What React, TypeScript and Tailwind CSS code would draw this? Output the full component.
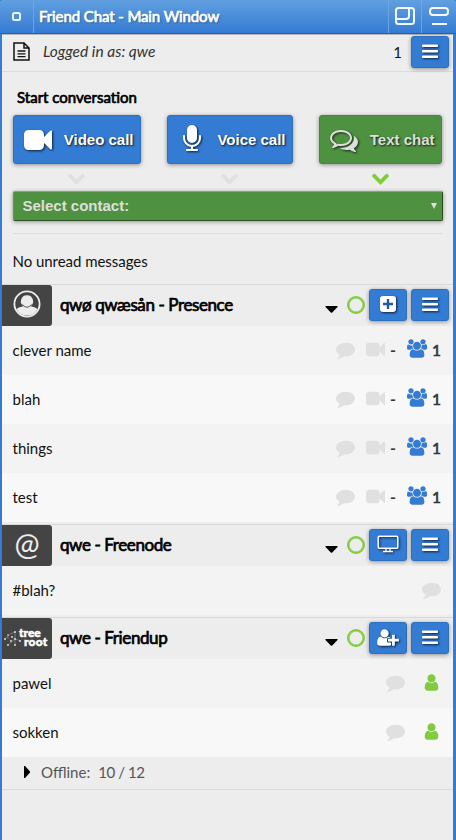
import type { ReactNode } from "react";

const PATHS = {
  users:
    "M593 896q-162 5-265 128h-134q-82 0-138-40.500t-56-118.500q0-353 124-353 6 0 43.500 21t97.500 42.500 119 21.500q67 0 133-23-5 37-5 66 0 159 93 293zm1071 637q0 120-73 189.500t-194 69.500h-874q-121 0-194-69.500t-73-189.500q0-53 3.500-103.500t14-109 26.500-108.500 43-97.500 62-81 85.500-53.500 111.500-20q10 0 43 21.500t73 48 107 48 135 21.500 135-21.500 107-48 73-48 43-21.500q61 0 111.500 20t85.500 53.500 62 81 43 97.500 26.500 108.500 14 109 3.500 103.500zm-1024-1277q0 106-75 181t-181 75-181-75-75-181 75-181 181-75 181 75 75 181zm704 384q0 159-112.500 271.500t-271.500 112.500-271.500-112.500-112.500-271.500 112.500-271.500 271.500-112.500 271.500 112.500 112.500 271.500zm576 225q0 78-56 118.500t-138 40.500h-134q-103-123-265-128 93-134 93-293 0-29-5-66 66 23 133 23 59 0 119-21.500t97.500-42.500 43.500-21q124 0 124 353zm-128-609q0 106-75 181t-181 75-181-75-75-181 75-181 181-75 181 75 75 181z",
  comment:
    "M1792 896q0 174-120 321.500t-326 233-450 85.500q-70 0-145-8-198 175-460 242-49 14-114 22-17 2-30.500-9t-17.500-29v-1q-3-4-.5-12t2-10 4.500-9.500l6-9 7-8.500 8-9q7-8 31-34.500t34.500-38 31-39.500 32.500-51 27-59 26-76q-157-89-247.500-220t-90.500-281q0-130 71-248.500t191-204.500 286-136.500 348-50.500q244 0 450 85.500t326 233 120 321.500z",
  comments:
    "M704 384q-153 0-286 52t-211.500 141-78.500 191q0 82 53 158t149 132l97 56-35 84q34-20 62-39l44-31 53 10q78 14 153 14 153 0 286-52t211.500-141 78.500-191-78.500-191-211.500-141-286-52zm0-128q191 0 353.500 68.500t256.500 186.500 94 257-94 257-256.500 186.500-353.500 68.500q-86 0-176-16-124 88-278 128-36 9-86 16h-3q-11 0-20.500-8t-11.500-21q-1-3-1-6.500t.5-6.500 2-6l2.500-5 3.500-5.500 4-5 4.500-5 4-4.500q5-6 23-25t26-29.500 22.500-29 25-38.500 20.500-44q-124-72-195-177t-71-224q0-139 94-257t256.500-186.500 353.500-68.500zm822 1169q10 24 20.500 44t25 38.500 22.500 29 26 29.500 23 25q1 1 4 4.500t4.500 5 4 5 3.500 5.500l2.500 5 2 6 .5 6.500-1 6.500q-3 14-13 22t-22 7q-50-7-86-16-154-40-278-128-90 16-176 16-271 0-472-132 58 4 88 4 161 0 309-45t264-129q125-92 192-212t67-254q0-77-23-152 129 71 204 178t75 230q0 120-71 224.500t-195 176.500z",
  video:
    "M1792 352v1088q0 42-39 59-13 5-25 5-27 0-45-19l-403-403v166q0 119-84.500 203.500t-203.500 84.500h-704q-119 0-203.500-84.500t-84.500-203.500v-704q0-119 84.500-203.500t203.500-84.500h704q119 0 203.500 84.500t84.500 203.500v165l403-402q18-19 45-19 12 0 25 5 39 17 39 59z",
  user:
    "M1536 1399q0 109-62.500 187t-150.500 78h-854q-88 0-150.500-78t-62.500-187q0-85 8.500-160.500t31.500-152 58.500-131 94-89 134.500-34.500q131 128 313 128t313-128q76 0 134.500 34.500t94 89 58.500 131 31.500 152 8.500 160.500zm-256-887q0 159-112.500 271.500t-271.500 112.500-271.500-112.500-112.500-271.500 112.500-271.500 271.500-112.500 271.500 112.500 112.500 271.500z",
  userPlus:
    "M704 896q-159 0-271.500-112.500t-112.500-271.500 112.500-271.500 271.500-112.500 271.500 112.500 112.500 271.500-112.500 271.500-271.500 112.500zm960 128h352q13 0 22.500 9.500t9.500 22.500v192q0 13-9.500 22.500t-22.500 9.500h-352v352q0 13-9.500 22.500t-22.500 9.500h-192q-13 0-22.500-9.500t-9.500-22.500v-352h-352q-13 0-22.500-9.500t-9.500-22.500v-192q0-13 9.500-22.500t22.500-9.500h352v-352q0-13 9.500-22.500t22.500-9.500h192q13 0 22.500 9.500t9.500 22.500v352zm-736 224q0 52 38 90t90 38h256v238q-68 50-171 50h-874q-121 0-194-69t-73-190q0-53 3.500-103.500t14-109 26.500-108.500 43-97.500 62-81 85.500-53.500 111.500-20q19 0 39 17 79 61 154.500 91.500t164.500 30.500 164.500-30.500 154.500-91.500q20-17 39-17 132 0 217 96h-223q-52 0-90 38t-38 90v192z",
  mic:
    "M1472 704v128q0 221-147.500 384.500t-364.500 187.500v132h256q26 0 45 19t19 45-19 45-45 19h-640q-26 0-45-19t-19-45 19-45 45-19h256v-132q-217-24-364.500-187.500t-147.500-384.500v-128q0-26 19-45t45-19 45 19 19 45v128q0 185 131.500 316.500t316.500 131.500 316.500-131.500 131.500-316.500v-128q0-26 19-45t45-19 45 19 19 45zm-256-384v512q0 132-94 226t-226 94-226-94-94-226v-512q0-132 94-226t226-94 226 94 94 226z",
  chevron:
    "M1683 808l-742 741q-19 19-45 19t-45-19l-742-741q-19-19-19-45.500t19-45.500l166-165q19-19 45-19t45 19l531 531 531-531q19-19 45-19t45 19l166 165q19 19 19 45.500t-19 45.500z",
};

type IconName = keyof typeof PATHS;

function Icon({ name, className, wide = 1792 }: { name: IconName; className: string; wide?: number }) {
  return (
    <svg viewBox={`0 0 ${wide} 1792`} className={`shrink-0 ${className}`} fill="currentColor">
      <path d={PATHS[name]} />
    </svg>
  );
}

const SHADOW = "drop-shadow-[1px_1px_1px_rgba(0,0,0,0.75)]";
const HEAVY = "[-webkit-text-stroke:0.7px_currentColor]";

function BlueButton({ children }: { children: ReactNode }) {
  return (
    <button className="flex h-8 w-[38px] shrink-0 items-center justify-center rounded-[3px] border border-[#2c6fbf] bg-[#347bd3] text-white shadow-[0_1px_4px_rgba(0,0,0,0.4)]">
      {children}
    </button>
  );
}

function Bars() {
  return (
    <svg viewBox="0 0 18 16" className={`-mt-[2px] h-4 w-[18px] ${SHADOW}`} fill="white">
      <rect x="1" y="1.500" width="16" height="2.500" rx=".7" />
      <rect x="1" y="7" width="16" height="2.500" rx=".7" />
      <rect x="1" y="12.500" width="16" height="2.500" rx=".7" />
    </svg>
  );
}

function PlusBox() {
  return (
    <svg viewBox="0 0 16 16" className={`-mt-[2px] h-4 w-4 ${SHADOW}`}>
      <rect width="16" height="16" rx="3" fill="white" />
      <path d="M8 3v10M3 8h10" stroke="#2458a0" strokeWidth="2.4" />
    </svg>
  );
}

function Monitor() {
  return (
    <svg viewBox="0 0 22 18" className={`-mt-[1px] h-[18px] w-[22px] ${SHADOW}`} fill="none" stroke="white">
      <rect x="1.2" y="1.2" width="19.6" height="12" rx="1" strokeWidth="1.5" />
      <path d="M9 13v3M13 13v3M6 16.5h10" strokeWidth="1.3" />
    </svg>
  );
}

function PersonAvatar() {
  return (
    <svg viewBox="0 0 28 28" className="-mt-[3px] h-7 w-7">
      <circle cx="14" cy="14" r="12.6" fill="none" stroke="#ededed" strokeWidth="1.8" />
      <path
        d="M14 5.2a6 6 0 0 1 3.4 11c3.1.7 5.2 1 7.1 3A12 12 0 0 1 14 25.6 12 12 0 0 1 3.500 19.200c1.900-2 4-2.300 7.100-3A6 6 0 0 1 14 5.200z"
        fill="#ededed"
      />
      <path d="M9.500 14.500q4.500 5.500 9 0" fill="none" stroke="#444" strokeWidth=".9" />
    </svg>
  );
}

function TreerootAvatar() {
  return (
    <div className="flex w-full items-center pl-[2px]">
      <svg viewBox="0 0 18 20" className="h-5 w-[18px] shrink-0" fill="#e8e8e8">
        <path d="M1 10l5-5 5-2M5 15l6-5v6M11 3v7l6 2M4 7v3" fill="none" stroke="#a5a5a5" strokeWidth=".5" />
        <circle cx="1" cy="10" r=".9" />
        <circle cx="4" cy="6" r=".8" />
        <circle cx="11" cy="3" r=".9" />
        <circle cx="8" cy="8" r=".9" />
        <circle cx="7" cy="12" r=".9" />
        <circle cx="4" cy="16" r=".9" />
        <circle cx="11" cy="16" r=".9" />
        <circle cx="11" cy="10" r=".9" />
        <circle cx="16" cy="12" r=".9" />
      </svg>
      <div className="-ml-[3px] -mt-[3px] flex flex-col font-['Lato'] text-[12px] font-black leading-[9px] text-white [-webkit-text-stroke:0.5px_white]">
        <span>tree</span>
        <span className="pl-[5px] tracking-[0.2px]">root</span>
      </div>
    </div>
  );
}

function SectionHeader({ avatar, title, action }: { avatar: ReactNode; title: string; action: ReactNode }) {
  return (
    <div className="flex h-[42px] items-center border-t border-[#d9d9d9] bg-[#ededed] pr-1">
      <div className="flex h-[41px] w-[50px] shrink-0 items-center justify-center overflow-hidden rounded-r-[3px] bg-[#444]">
        {avatar}
      </div>
      <h2 className={`flex-1 pb-[2px] pl-2 text-[17px] font-normal leading-5 tracking-[-0.4px] text-black ${HEAVY}`}>{title}</h2>
      <svg viewBox="0 0 12 7" className="mr-[9px] mt-[8px] h-[7px] w-[13px]">
        <path d="M0 0h12v1L6.500 6.700h-1L0 1z" />
      </svg>
      <span className="-mt-[2px] mr-[4px] h-[18px] w-[18px] rounded-full border-[2.500px] border-[#82cb3f] shadow-[inset_0_0_0_0.5px_#82cb3f]" />
      <div className="-mt-[2px] flex gap-1">
        {action}
        <BlueButton>
          <Bars />
        </BlueButton>
      </div>
    </div>
  );
}

function Row({ name, light, children }: { name: string; light?: boolean; children: ReactNode }) {
  return (
    <div className={`flex h-[49px] items-center pb-[2px] pl-[10.500px] text-[15px] text-[#111] ${light ? "bg-[#f8f8f8]" : "bg-[#f3f3f3]"}`}>
      <span className="flex-1">{name}</span>
      {children}
    </div>
  );
}

function RoomStatus() {
  return (
    <div className="flex items-center pr-[12px]">
      <Icon name="comment" className="mr-[11px] h-[19px] w-[19px] text-[#e0e0e0]" />
      <Icon name="video" className="h-[19px] w-[19px] text-[#e0e0e0]" />
      <span className="ml-[5px] w-[17px] text-[16px] font-bold text-[#333]">-</span>
      <Icon name="users" wide={1920} className="-mt-[2px] h-[19px] w-5 text-[#347bd3]" />
      <span className="ml-[5px] text-[15.500px] text-[#333] [-webkit-text-stroke:0.6px_currentColor]">1</span>
    </div>
  );
}

function BuddyStatus() {
  return (
    <div className="flex items-center pr-[12px]">
      <Icon name="comment" className="mr-[17px] h-[19px] w-[19px] text-[#e0e0e0]" />
      <Icon name="user" className="h-[19px] w-[19px] text-[#82cb3f]" />
    </div>
  );
}

function CallButton({ icon, label, className }: { icon: ReactNode; label: string; className: string }) {
  return (
    <button
      className={`flex h-[49px] items-center rounded-[3px] border font-['Liberation_Sans',Arial,sans-serif] text-[15px] font-bold shadow-[0_1px_4px_rgba(0,0,0,0.4)] ${className}`}
    >
      {icon}
      <span className="flex-1 whitespace-nowrap pr-[6.500px] text-right [text-shadow:1px_1px_2px_rgba(0,0,0,0.8)]">{label}</span>
    </button>
  );
}

export default function App() {
  return (
    <div className="h-[840px] w-[456px] overflow-hidden bg-[#347bd3] font-['Lato','Noto_Sans',sans-serif]">
      <header className="flex h-[34px] items-center rounded-t-[3px] border-b border-[#285fa9] bg-gradient-to-b from-[#619fdf] to-[#347bd3]">
        <div className="flex h-full w-[34px] items-center justify-center border-r border-[#6da5e3] pr-[1px] pb-[1px]">
          <span className="h-[9px] w-[9px] rounded-[2.500px] border-2 border-white/90" />
        </div>
        <h1 className={`flex-1 pb-[2px] pl-[5px] text-[15px] leading-5 tracking-[-0.1px] text-white [text-shadow:1px_1px_2px_rgba(0,0,0,0.4)] ${HEAVY}`}>
          Friend Chat - Main Window
        </h1>
        <div className="flex h-full w-[33px] items-center justify-center border-l border-[#6da5e3] pb-[2px]">
          <svg viewBox="0 0 20 18" className="h-[18px] w-5" fill="none" stroke="#f4f8fd" strokeWidth="2">
            <rect x="1" y="1" width="18" height="16" rx="2.500" />
            <path d="M14 1v8q0 3-3 3H1" />
          </svg>
        </div>
        <div className="flex h-full w-[35px] items-center justify-center border-l border-[#6da5e3] pb-[2px]">
          <svg viewBox="0 0 20 18" className="h-[18px] w-5" fill="none" stroke="#f4f8fd" strokeWidth="2">
            <rect x="1" y="1" width="18" height="7" rx="3" />
            <path d="M3 17h15" />
          </svg>
        </div>
      </header>

      <main className="ml-[2px] mr-[3px] h-[806px] bg-[#ededed] text-[15px] leading-5 text-[#111]">
        <div className="flex h-[38px] items-center border-b border-[#dcdcdc] border-t border-t-[#b5b5b5] pb-[2px] pr-1">
          <svg viewBox="0 0 17 19" className="-mt-[1px] ml-[11px] h-[19px] w-[17px]" fill="none" stroke="#111" strokeWidth="1.5">
            <path d="M1 1h10l5 5v12H1zM11 1v5h5" />
            <path d="M4.500 9h8M4.500 11.800h8M4.500 14.600h8" strokeWidth="1.3" />
          </svg>
          <span className="flex-1 pb-[2px] pl-[13px] text-[15.500px] italic text-[#333]">Logged in as: qwe</span>
          <span className="pr-[9px]">1</span>
          <BlueButton>
            <Bars />
          </BlueButton>
        </div>

        <section className="mx-[11px] h-[162px] border-b border-[#dcdcdc] pt-[15px]">
          <h2 className={`pl-1 text-[15px] leading-5 text-black ${HEAVY}`}>Start conversation</h2>
          <div className="mt-2 flex">
            <CallButton
              className="w-[128px] border-[#2c6fbf] bg-[#347bd3] text-white"
              label="Video call"
              icon={<Icon name="video" className={`ml-[10px] h-7 w-7 ${SHADOW}`} />}
            />
            <CallButton
              className="ml-[26px] w-[126px] border-[#2c6fbf] bg-[#347bd3] text-white"
              label="Voice call"
              icon={<Icon name="mic" className={`-mt-[1px] ml-[10px] h-7 w-7 ${SHADOW}`} />}
            />
            <CallButton
              className="ml-[26px] w-[123px] border-[#418360] bg-[#4e9140] text-[#dedede]"
              label="Text chat"
              icon={<Icon name="comments" className={`ml-[10px] h-7 w-7 ${SHADOW}`} />}
            />
          </div>
          <div className="flex h-[27px] items-center">
            <Icon name="chevron" className="ml-[54px] h-[19px] w-[19px] text-[#e0e0e0]" />
            <Icon name="chevron" className="ml-[134px] h-[19px] w-[19px] text-[#e0e0e0]" />
            <Icon name="chevron" className="ml-[132px] h-[19px] w-[19px] text-[#82cb3f]" />
          </div>
          <div className="-mr-[1px] flex h-[30px] items-center justify-between rounded-[2px] border border-b-[#29511f] border-l-[#61954f] border-r-[#29511f] border-t-[#7cad70] bg-[#4e9140] pl-[8.500px] pr-[5px] font-['Liberation_Sans',Arial,sans-serif] font-bold text-[#dedede] shadow-[0_1px_4px_rgba(0,0,0,0.4)]">
            <span>Select contact:</span>
            <svg viewBox="0 0 6 6" className="h-[6px] w-[6px]">
              <path d="M0 0h6L3 6z" fill="#dedede" />
            </svg>
          </div>
        </section>

        <div className="flex h-[50px] items-center pl-[10.500px] pt-[3px] tracking-[-0.04px]">No unread messages</div>

        <SectionHeader
          avatar={<PersonAvatar />}
          title="qwø qwæsån - Presence"
          action={<BlueButton><PlusBox /></BlueButton>}
        />
        <Row name="clever name"><RoomStatus /></Row>
        <Row name="blah" light><RoomStatus /></Row>
        <Row name="things"><RoomStatus /></Row>
        <Row name="test" light><RoomStatus /></Row>

        <div className="h-[2px]" />
        <SectionHeader
          avatar={<span className="-mt-[5px] text-[30px] leading-none text-[#ededed]">@</span>}
          title="qwe - Freenode"
          action={<BlueButton><Monitor /></BlueButton>}
        />
        <Row name="#blah?">
          <Icon name="comment" className="mr-[12px] h-[19px] w-[19px] text-[#e0e0e0]" />
        </Row>

        <div className="h-[2px]" />
        <SectionHeader
          avatar={<TreerootAvatar />}
          title="qwe - Friendup"
          action={
            <BlueButton>
              <Icon name="userPlus" wide={2048} className={`-mt-[1px] h-[19px] w-[22px] ${SHADOW}`} />
            </BlueButton>
          }
        />
        <Row name="pawel"><BuddyStatus /></Row>
        <Row name="sokken" light><BuddyStatus /></Row>
        <div className="flex h-[33px] items-center border-b border-[#dcdcdc] pb-[3px] pl-[22px] text-[#555]">
          <svg viewBox="0 0 6 12" className="h-3 w-[6px]">
            <path d="M0 0h1l5 5.500v1L1 12H0z" fill="black" />
          </svg>
          <span className="pl-[11px]">Offline:</span>
          <span className="pl-2 tracking-[-0.4px]">10 / 12</span>
        </div>
      </main>
    </div>
  );
}
